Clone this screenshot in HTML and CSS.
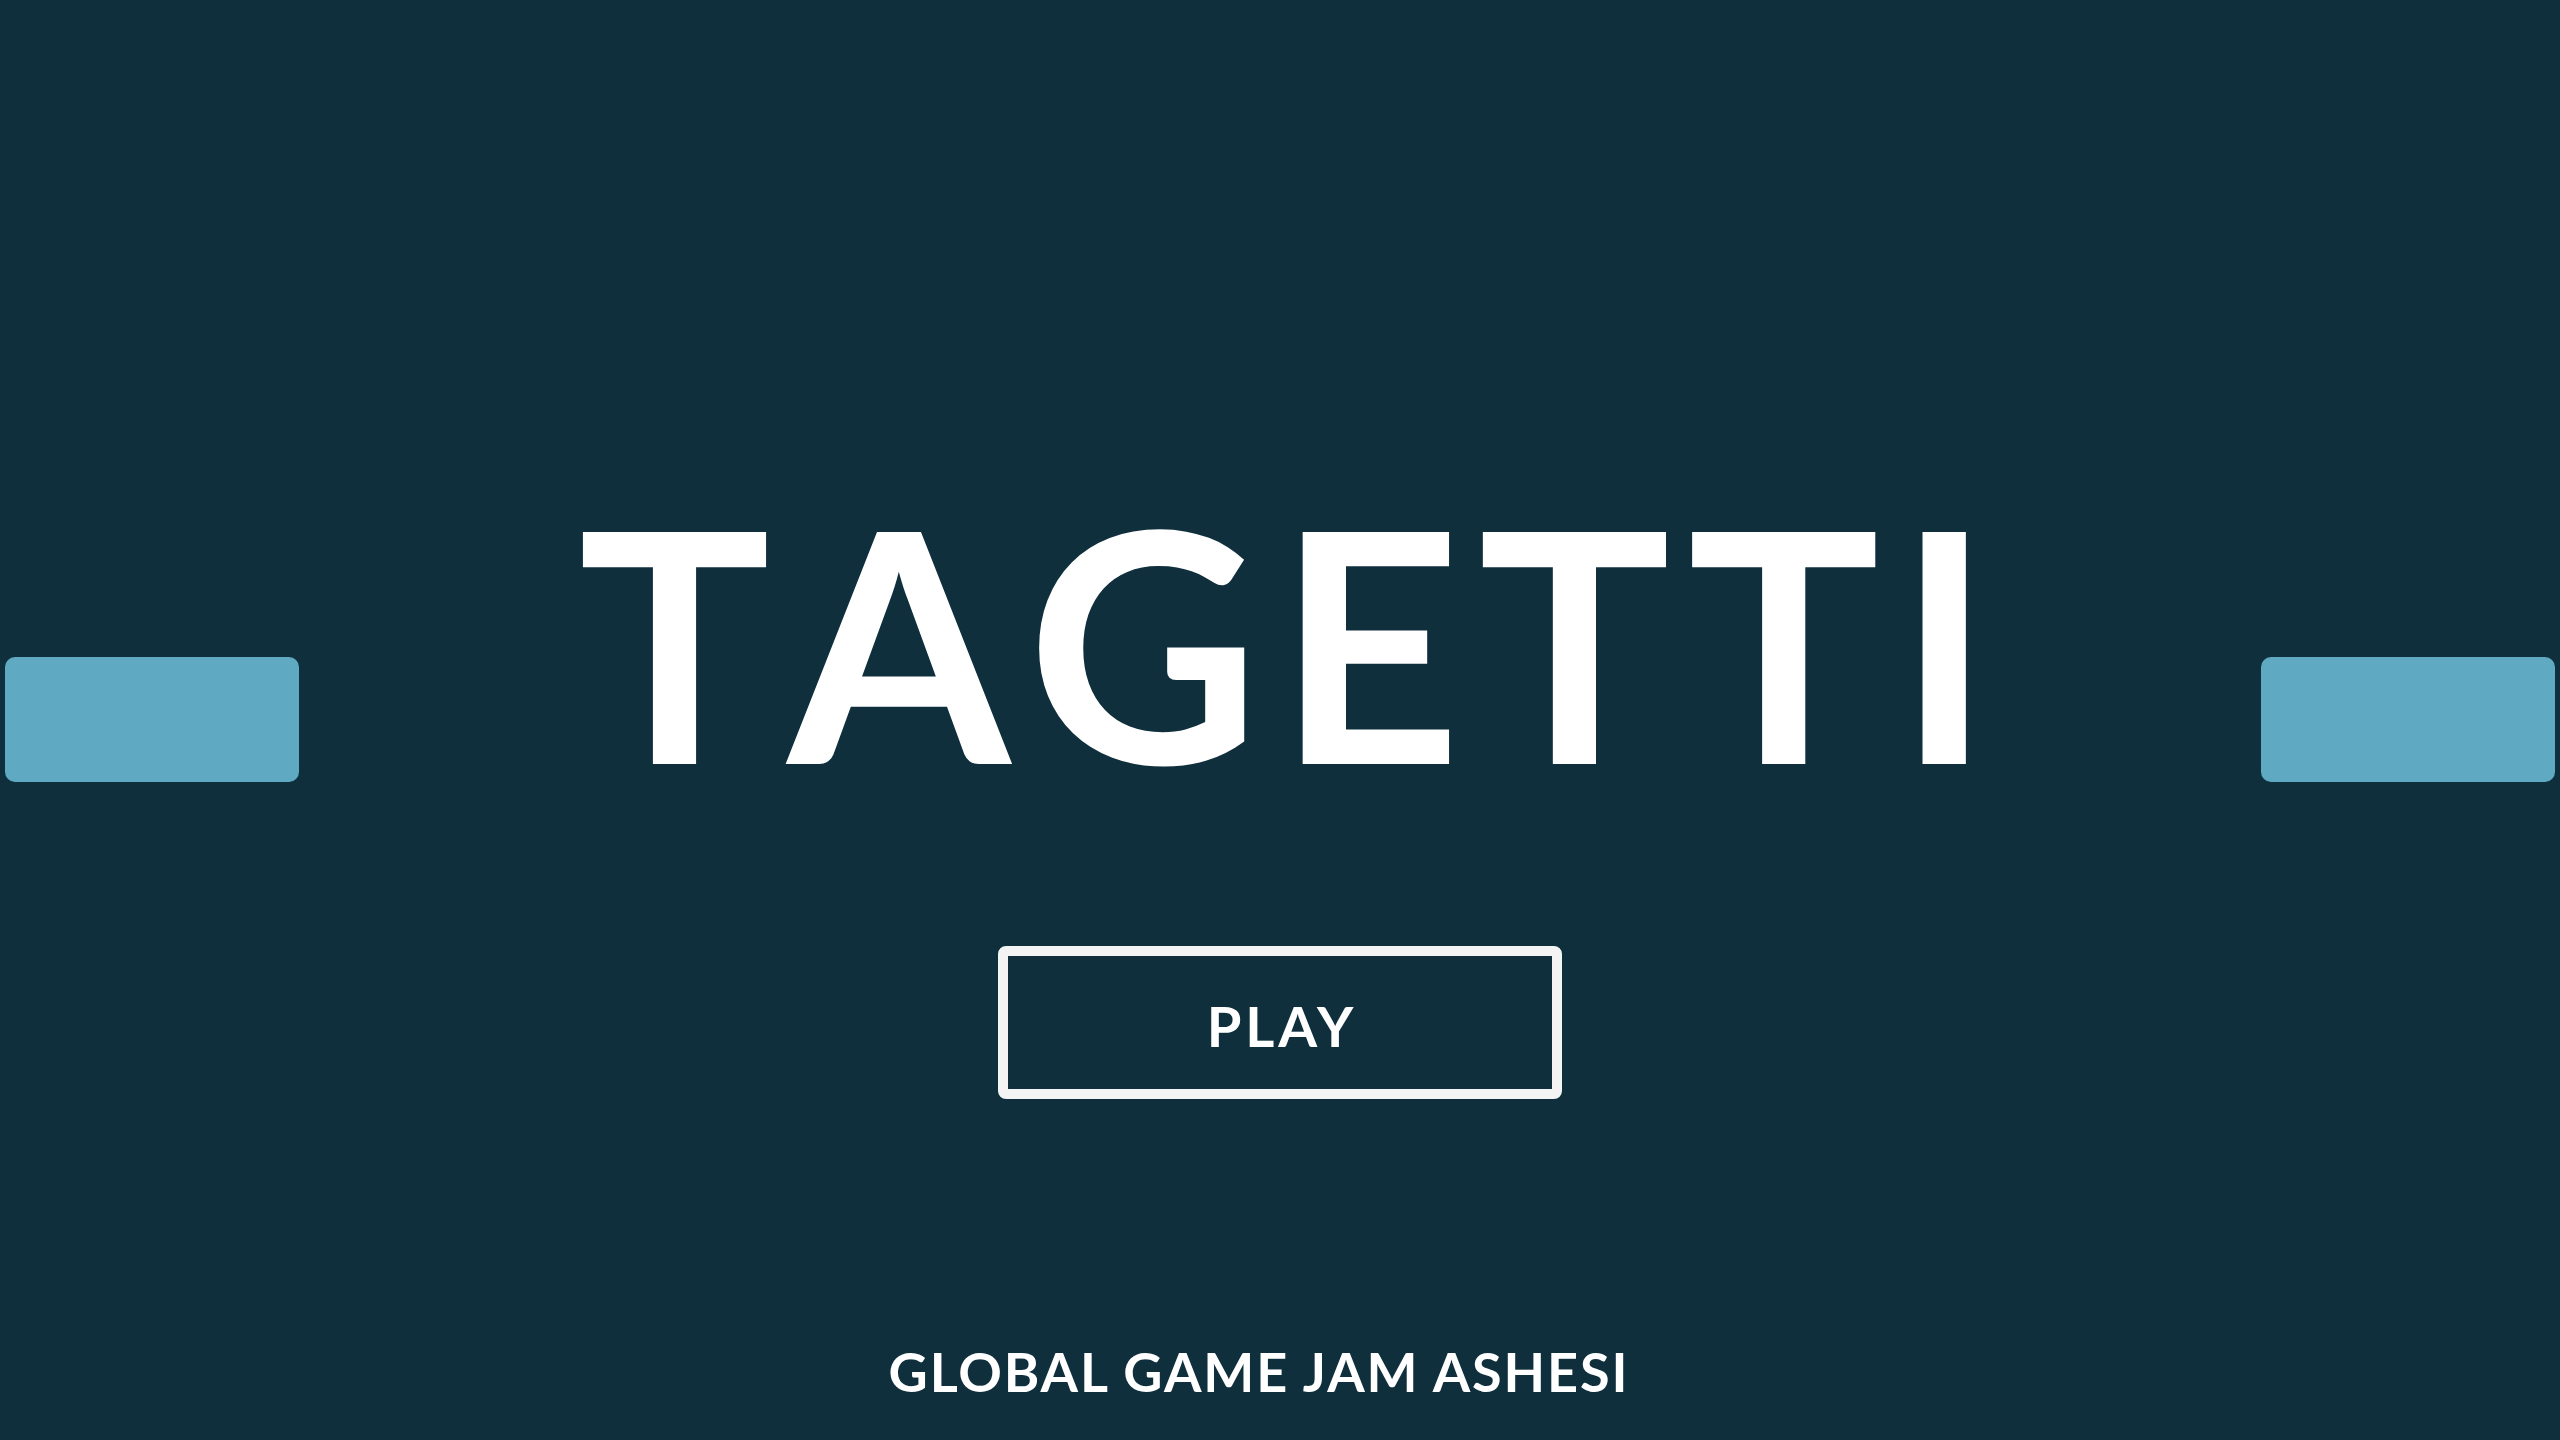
FILE: index.html
```html
<!DOCTYPE html>
<html lang="en">
<head>
<meta charset="utf-8">
<title>Tagetti</title>
<link rel="stylesheet" href="styles.css">
</head>
<body>
<main class="screen">
  <div class="stage">
    <div class="paddle paddle-left"></div>
    <h1 class="title">TAGETTI</h1>
    <div class="paddle paddle-right"></div>
  </div>
  <button class="play" type="button">PLAY</button>
  <footer class="credit">GLOBAL GAME JAM ASHESI</footer>
</main>
</body>
</html>
```

FILE: styles.css
```css
html, body {
  margin: 0;
  padding: 0;
  background: #0e2f3b;
}

.screen {
  width: 2560px;
  height: 1440px;
  display: flex;
  flex-direction: column;
  align-items: center;
  overflow: hidden;
  font-family: "Lato", "Noto Sans", sans-serif;
  color: #ffffff;
}

.stage {
  width: 100%;
  box-sizing: border-box;
  padding: 479px 5px 0;
  display: grid;
  grid-template-columns: 294px 1fr 294px;
  align-items: start;
}

.paddle {
  height: 125px;
  margin-top: 178px;
  background: #5fa9c3;
  border-radius: 10px;
}

.title {
  margin: 0;
  padding-left: 10px;
  text-align: center;
  font-size: 321px;
  line-height: 1;
  font-weight: 700;
  letter-spacing: 0.052em;
  text-indent: 0.052em;
  font-kerning: none;
}

.play {
  margin-top: 146px;
  width: 564px;
  height: 153px;
  box-sizing: border-box;
  border: 10px solid #f4f4f4;
  border-radius: 8px;
  background: transparent;
  color: #ffffff;
  font-family: "Lato", "Noto Sans", sans-serif;
  font-size: 56px;
  font-weight: 700;
  letter-spacing: 0.07em;
  text-indent: 0.07em;
  padding: 6px 0 0;
  line-height: 1;
}

.credit {
  margin-top: 246px;
  margin-right: 42px;
  font-size: 54px;
  font-weight: 700;
  line-height: 1;
  letter-spacing: 0.035em;
}
```
